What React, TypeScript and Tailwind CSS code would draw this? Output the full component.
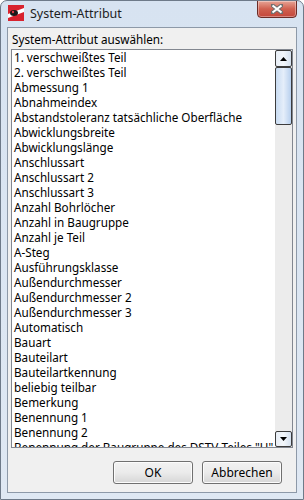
import React from 'react';

const items = [
  '1. verschweißtes Teil',
  '2. verschweißtes Teil',
  'Abmessung 1',
  'Abnahmeindex',
  'Abstandstoleranz tatsächliche Oberfläche',
  'Abwicklungsbreite',
  'Abwicklungslänge',
  'Anschlussart',
  'Anschlussart 2',
  'Anschlussart 3',
  'Anzahl Bohrlöcher',
  'Anzahl in Baugruppe',
  'Anzahl je Teil',
  'A-Steg',
  'Ausführungsklasse',
  'Außendurchmesser',
  'Außendurchmesser 2',
  'Außendurchmesser 3',
  'Automatisch',
  'Bauart',
  'Bauteilart',
  'Bauteilartkennung',
  'beliebig teilbar',
  'Bemerkung',
  'Benennung 1',
  'Benennung 2',
  'Benennung der Baugruppe des DSTV-Teiles "U"',
];

const AppIcon = () => (
  <svg width="16" height="16" viewBox="0 0 16 16">
    <rect x="0" y="0" width="16" height="16" fill="#d8232e" />
    <path d="M0 9 L16 3 L16 7 L0 13 Z" fill="#ffffff" />
    <ellipse cx="6" cy="8" rx="4" ry="3" fill="#1a1a1a" />
    <circle cx="5" cy="7" r="1.2" fill="#e03a44" />
  </svg>
);

const Arrow = ({ up }: { up: boolean }) => (
  <svg width="7" height="4" viewBox="0 0 7 4">
    {up ? <path d="M0 4 L3.5 0 L7 4 Z" fill="#000" /> : <path d="M0 0 L3.5 4 L7 0 Z" fill="#000" />}
  </svg>
);

const WinButton = ({ label }: { label: string }) => (
  <button className="w-[80px] h-[23px] rounded-[3px] border border-[#707070] bg-gradient-to-b from-[#f2f2f2] via-[#ebebeb] to-[#d6d6d6] shadow-[inset_0_0_0_1px_#fcfcfc] text-[12px] text-black">
    {label}
  </button>
);

export default function App() {
  return (
    <div className="w-[304px] h-[500px] flex flex-col bg-gradient-to-b from-[#d7e3f1] to-[#dfe8f3] border border-[#6e7a89] rounded-t-[7px] font-['Segoe_UI','Noto_Sans',sans-serif] text-[11.7px] text-black overflow-hidden">
      {/* title bar */}
      <div className="h-[26px] flex items-start relative">
        <div className="ml-[7px] mt-[4px]">
          <AppIcon />
        </div>
        <span className="ml-[6px] mt-[5px] text-[12.5px] leading-[16px] text-[#1e1e1e]">System-Attribut</span>
        <div className="absolute right-[6px] top-[-1px] w-[40px] h-[18px] rounded-b-[4px] border border-[#6b2c27] bg-gradient-to-b from-[#e6a496] via-[#d0604f] to-[#c4473b] flex items-center justify-center shadow-[inset_0_0_0_1px_rgba(255,255,255,0.35)]">
          <svg width="12" height="10" viewBox="0 0 12 10">
            <path d="M1 1 L11 9 M11 1 L1 9" stroke="#6f6f6f" strokeWidth="4" strokeLinecap="square" />
            <path d="M1.5 1.5 L10.5 8.5 M10.5 1.5 L1.5 8.5" stroke="#ffffff" strokeWidth="2.2" />
          </svg>
        </div>
      </div>

      {/* client area */}
      <div className="mx-[6px] mb-[6px] flex-1 border border-[#8d99a8] bg-[#f0f0f0] flex flex-col px-[3px]">
        <div className="mt-[4px] h-[15px] leading-[15px] pl-[1px]">System-Attribut auswählen:</div>
        <div className="mt-[2px] h-[399px] border border-[#828790] bg-white flex">
          <div className="flex-1 overflow-hidden pl-[2px]">
            {items.map((t) => (
              <div key={t} className="h-[15px] leading-[15px] whitespace-nowrap">
                {t}
              </div>
            ))}
          </div>
          {/* scrollbar */}
          <div className="w-[17px] bg-[#ececec] flex flex-col">
            <div className="h-[17px] rounded-[2px] border border-[#3c3c3c] bg-gradient-to-r from-[#e8eef6] via-[#f3f7fb] to-[#d5e1ef] flex items-center justify-center">
              <Arrow up />
            </div>
            <div className="h-[58px] rounded-[2px] border border-[#3c3c3c] bg-gradient-to-r from-[#c9dcf2] via-[#e5eefa] to-[#b8d0ee]" />
            <div className="flex-1" />
            <div className="h-[16px] rounded-[2px] border border-[#3c3c3c] bg-gradient-to-r from-[#e8eef6] via-[#f3f7fb] to-[#d5e1ef] flex items-center justify-center">
              <Arrow up={false} />
            </div>
          </div>
        </div>
        <div className="mt-[13px] flex justify-end gap-[9px] pr-[11px]">
          <WinButton label="OK" />
          <WinButton label="Abbrechen" />
        </div>
      </div>
    </div>
  );
}
